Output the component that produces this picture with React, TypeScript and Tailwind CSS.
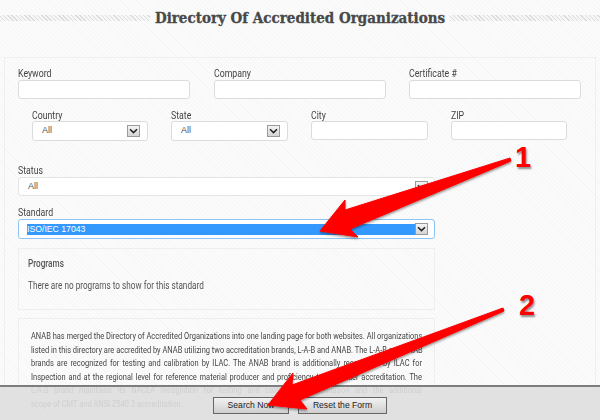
import React from "react";

const base = { fontFamily: "Roboto, sans-serif" };
const arial = { fontFamily: "'Liberation Sans', sans-serif" };

const lines = [
  "ANAB has merged the Directory of Accredited Organizations into one landing page for both websites. All organizations",
  "listed in this directory are accredited by ANAB utilizing two accreditation brands, L-A-B and ANAB. The L-A-B and ANAB",
  "brands are recognized for testing and calibration by ILAC. The ANAB brand is additionally recognized by ILAC for",
  "Inspection and at the regional level for reference material producer and proficiency test provider accreditation. The",
  "L-A-B brand maintains its NACLA recognition for testing and calibration accreditation and the additional",
];

function Chevron() {
  return (
    <span className="flex h-[12px] w-[13px] shrink-0 items-center justify-center border border-[#9a9a9a] bg-gradient-to-b from-[#f4f4f4] to-[#d4d4d4]">
      <svg width="9" height="6" viewBox="0 0 9 6" fill="none">
        <path d="M1 1.2 L4.5 4.6 L8 1.2" stroke="#222" strokeWidth="1.5" />
      </svg>
    </span>
  );
}

function Label({ children, className = "" }: { children: React.ReactNode; className?: string }) {
  return (
    <div className={`origin-left scale-x-[0.85] whitespace-nowrap text-[10.3px] text-[#444] ${className}`}>{children}</div>
  );
}

function Input({ label, labelClass }: { label: string; labelClass: string }) {
  return (
    <div>
      <Label className={labelClass}>{label}</Label>
      <div className="h-[19px] rounded-[3px] border border-[#dcdcdc] bg-white" />
    </div>
  );
}

function Select({ label, value }: { label: string; value: string }) {
  return (
    <div>
      <Label className="h-[11px] leading-[11px]">{label}</Label>
      <div className="flex h-[20px] items-center justify-between rounded-[3px] border border-[#dcdcdc] bg-white pl-[9px] pr-[7px] text-[9px] text-[#555]">
        <span style={arial}>{value}</span>
        <Chevron />
      </div>
    </div>
  );
}

export default function App() {
  return (
    <div
      className="relative h-[420px] w-[600px] overflow-hidden bg-[#fafafa] bg-[repeating-linear-gradient(45deg,#f7f7f7_0px,#f7f7f7_1px,#fbfbfb_1px,#fbfbfb_3px)]"
      style={base}
    >
      <div className="flex h-[36px] items-center gap-[5px]">
        <div className="h-[6px] flex-1 bg-[repeating-linear-gradient(45deg,#dcdcdc_0px,#dcdcdc_1px,#f6f6f6_1px,#f6f6f6_3px)]" />
        <h1
          className="whitespace-nowrap text-[15px] font-bold font-stretch-condensed leading-none text-[#484848] [-webkit-text-stroke:0.3px_#484848]"
          style={{ fontFamily: "'DejaVu Serif', serif" }}
        >
          Directory Of Accredited Organizations
        </h1>
        <div className="h-[6px] flex-1 bg-[repeating-linear-gradient(45deg,#dcdcdc_0px,#dcdcdc_1px,#f6f6f6_1px,#f6f6f6_3px)]" />
      </div>

      <div className="mx-[4px] mt-[21px] h-[400px] border border-[#efefef] pl-[13px] pt-[9px]">
        <div className="grid w-[564px] grid-cols-[172px_172px_172px] gap-x-[23.5px]">
          <Input label="Keyword" labelClass="h-[13px] leading-[13px]" />
          <Input label="Company" labelClass="h-[13px] leading-[13px]" />
          <Input label="Certificate #" labelClass="h-[13px] leading-[13px]" />
        </div>
        <div className="ml-[14px] mt-[11px] grid w-[535px] grid-cols-[116px_117px_117px_116px] gap-x-[23px]">
          <Select label="Country" value="All" />
          <Select label="State" value="All" />
          <Input label="City" labelClass="h-[11px] leading-[11px]" />
          <Input label="ZIP" labelClass="h-[11px] leading-[11px]" />
        </div>

        <div className="mt-[23px] w-[417px]">
          <Label className="h-[13px] leading-[13px]">Status</Label>
          <div className="flex h-[19px] items-center justify-between rounded-[3px] border border-[#e4e4e4] bg-white pl-[9px] pr-[6px] text-[9px] text-[#555]">
            <span style={arial}>All</span>
            <Chevron />
          </div>

          <Label className="mt-[11px] h-[12px] leading-[12px]">Standard</Label>
          <div className="flex h-[20px] items-center rounded-[3px] border border-[#8cc4f5] bg-white pl-[8px] pr-[6px]">
            <span className="h-[11px] flex-1 bg-[#3399ff] text-[8.7px] leading-[11px] text-white" style={arial}>
              ISO/IEC 17043
            </span>
            <Chevron />
          </div>

          <div className="mt-[9px] h-[62px] border border-[#eeeeee] pl-[9px] pt-[8px] text-[#555]">
            <div className="origin-left scale-x-[0.82] text-[10px] font-medium leading-[14px]">Programs</div>
            <div className="mt-[8px] origin-left scale-x-[0.82] whitespace-nowrap text-[10px] leading-[14px]">
              There are no programs to show for this standard
            </div>
          </div>

          <div className="mt-[8px] border border-[#eeeeee] px-[12px] pb-[12px] pt-[11px] text-[9px] leading-[13.6px] text-[#444]">
            <div className="w-[471px] origin-left scale-x-[0.83]">
              {lines.map((l) => (
                <div key={l} className="whitespace-nowrap text-justify [text-align-last:justify]">
                  {l}
                </div>
              ))}
              <div>scope of CMT and ANSI Z540.3 accreditation.</div>
            </div>
          </div>
        </div>
      </div>

      <div className="absolute inset-x-0 bottom-0 flex h-[35px] items-start justify-center gap-[9px] border-t-2 border-[#7d7d7d] bg-[#dedede]/90 pt-[10px]">
        <button
          className="h-[17px] w-[76px] border border-[#666] bg-gradient-to-b from-[#f2f2f2] to-[#cfcfcf] text-[8.6px] leading-[15px] text-[#222]"
          style={arial}
        >
          Search Now
        </button>
        <button
          className="h-[17px] w-[89px] border border-[#666] bg-gradient-to-b from-[#f2f2f2] to-[#cfcfcf] text-[8.6px] leading-[15px] text-[#222]"
          style={arial}
        >
          Reset the Form
        </button>
      </div>

      <svg className="pointer-events-none absolute left-0 top-0" width="600" height="420" viewBox="0 0 600 420">
        <defs>
          <filter id="s" x="-10%" y="-10%" width="120%" height="130%">
            <feDropShadow dx="0" dy="1.5" stdDeviation="1" floodColor="#000" floodOpacity="0.45" />
          </filter>
        </defs>
        <path
          d="M510 158 L511 161 L350 229 L358 237 L320 231 L345 200 L345 210 Z"
          fill="#fe0000"
          stroke="#fe0000"
          strokeLinejoin="round"
          filter="url(#s)"
        />
        <path
          d="M503 308 L504 311 L300 400 L307 409 L268 405 L293 373 L292 385 Z"
          fill="#fe0000"
          stroke="#fe0000"
          strokeLinejoin="round"
          filter="url(#s)"
        />
      </svg>

      <div
        className="absolute left-[515px] top-[141px] text-[29px] font-bold leading-[32px] text-[#fe0000] [paint-order:stroke_fill] [-webkit-text-stroke:3px_white] [text-shadow:1px_2px_2px_rgba(0,0,0,0.45)]"
        style={arial}
      >
        1
      </div>
      <div
        className="absolute left-[519px] top-[289px] text-[29px] font-bold leading-[32px] text-[#fe0000] [paint-order:stroke_fill] [-webkit-text-stroke:3px_white] [text-shadow:1px_2px_2px_rgba(0,0,0,0.45)]"
        style={arial}
      >
        2
      </div>
    </div>
  );
}
